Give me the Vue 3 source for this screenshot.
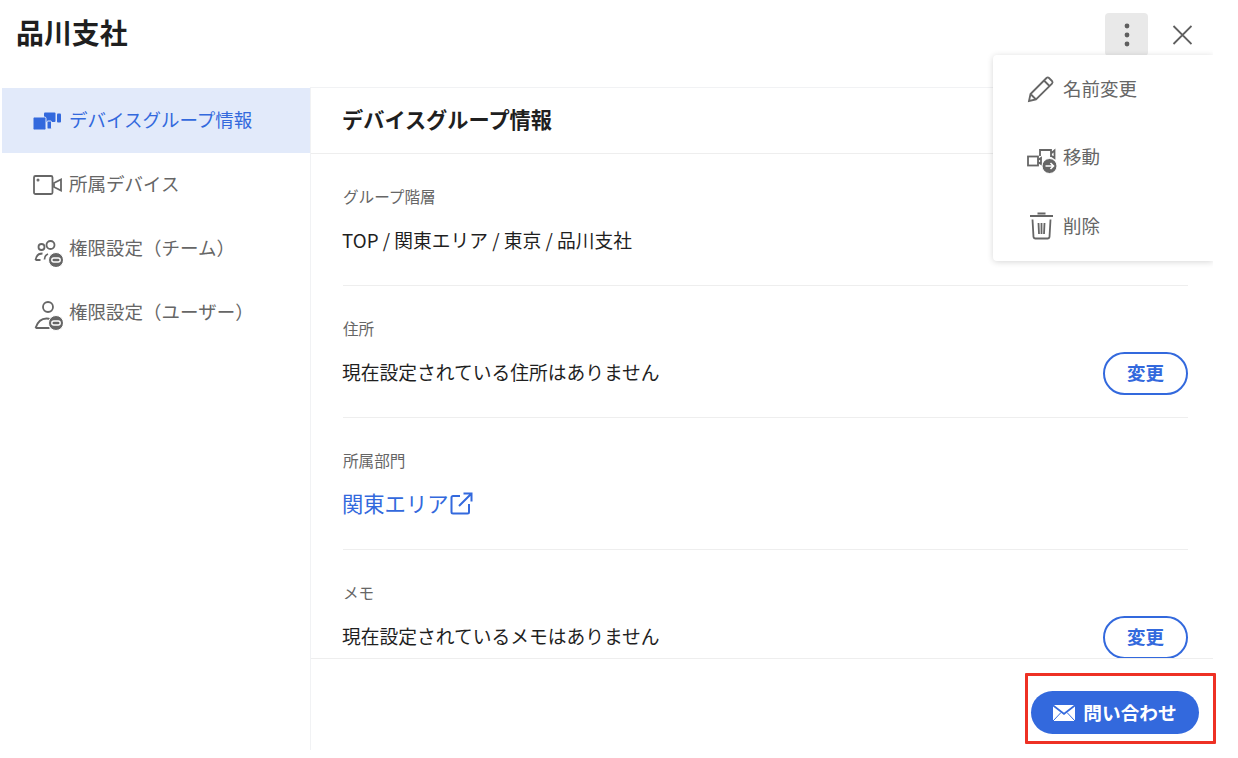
<template>
  <div class="page">
    <header class="top">
      <h1>品川支社</h1>
      <div class="top-actions">
        <button class="more">
          <svg width="6" height="24" viewBox="0 0 6 24"><circle cx="3" cy="3" r="2.4" /><circle cx="3" cy="12" r="2.4" /><circle cx="3" cy="21" r="2.4" /></svg>
        </button>
        <svg class="close" width="20" height="20" viewBox="0 0 20 20"><path d="M1.500 1l18 18M19.500 1L1.500 19" /></svg>
      </div>
    </header>

    <div class="body">
      <nav class="side">
        <a class="nav-item active">
          <svg width="30" height="22" viewBox="0 0 30 22" class="ico-fill">
            <rect x="11" y="2.500" width="11.500" height="9.500" rx="1" />
            <rect x="24" y="3.500" width="4" height="9" rx="1" />
            <rect x="14" y="11" width="4.500" height="8" rx="1" class="gap" />
            <rect x="0" y="7" width="13" height="13" rx="1.500" class="gap" />
          </svg>
          <span>デバイスグループ情報</span>
        </a>
        <a class="nav-item">
          <svg width="30" height="22" viewBox="0 0 30 22" class="ico-line">
            <rect x="1" y="2" width="18.500" height="18" rx="1.500" />
            <path d="M21 9l7-3.500v11L21 13z" />
            <circle cx="5" cy="6" r="0.600" />
          </svg>
          <span>所属デバイス</span>
        </a>
        <a class="nav-item">
          <svg width="30" height="36" viewBox="0 0 30 36" class="ico-line">
            <circle cx="8.500" cy="16" r="3" />
            <circle cx="17.500" cy="14" r="4" />
            <path d="M2.500 29h5M2.500 29c.5-4 3-6.500 7-6.500M11.500 28.500c0-2.500 1-4.500 3.500-5.500" />
            <circle cx="23" cy="29" r="7.500" class="dark" />
            <rect x="18.800" y="27" width="8.400" height="4" rx="2" class="cut" />
          </svg>
          <span>権限設定（チーム）</span>
        </a>
        <a class="nav-item">
          <svg width="30" height="36" viewBox="0 0 30 36" class="ico-line">
            <circle cx="15" cy="12" r="5" />
            <path d="M2.500 33h14M2.500 33c2-6 6-9.500 11-9.500 1.500 0 3 .3 4.500 1" />
            <circle cx="23" cy="28" r="7.500" class="dark" />
            <rect x="18.800" y="26" width="8.400" height="4" rx="2" class="cut" />
          </svg>
          <span>権限設定（ユーザー）</span>
        </a>
      </nav>

      <main class="main">
        <h2 class="main-title">デバイスグループ情報</h2>
        <div class="scroll">
          <section class="info">
            <p class="label">グループ階層</p>
            <div class="row"><span>TOP / 関東エリア / 東京 / 品川支社</span></div>
          </section>
          <section class="info">
            <p class="label">住所</p>
            <div class="row">
              <span>現在設定されている住所はありません</span>
              <button class="change">変更</button>
            </div>
          </section>
          <section class="info">
            <p class="label">所属部門</p>
            <div class="row">
              <a class="link">関東エリア
                <svg width="23" height="23" viewBox="0 0 23 23"><path d="M10 4H3a1.500 1.500 0 0 0-1.500 1.500v14.500a1.500 1.500 0 0 0 1.500 1.500h14.500a1.500 1.500 0 0 0 1.500-1.500v-8M9 14L21 2M13.500 1.500h8v8" /></svg>
              </a>
            </div>
          </section>
          <section class="info">
            <p class="label">メモ</p>
            <div class="row">
              <span>現在設定されているメモはありません</span>
              <button class="change">変更</button>
            </div>
          </section>
        </div>
        <footer class="foot">
          <button class="contact">
            <svg width="22" height="16" viewBox="0 0 22 16"><path class="env" d="M0 1.500 11 10 22 1.500V15a1 1 0 0 1-1 1H1a1 1 0 0 1-1-1zM1 0h20L11 7.800z" /><path class="env-line" d="M0 16l8-8.500M22 16l-8-8.500" /></svg>
            <span>問い合わせ</span>
          </button>
        </footer>
      </main>
    </div>

    <ul class="menu">
      <li>
        <svg width="30" height="28" viewBox="0 0 30 28" class="ico-line"><path d="M2 26l1.500-7L19.500 3a1.800 1.800 0 0 1 2.500 0l3 3a1.800 1.800 0 0 1 0 2.500L9 24.500zM3.500 19L9 24.500M17 5.500L22.500 11" /></svg>
        <span>名前変更</span>
      </li>
      <li>
        <svg width="30" height="26" viewBox="0 0 30 26" class="ico-line">
          <rect x="1" y="11.500" width="10" height="9" />
          <path d="M11 15l3-2v6l-3-2M13 11V5h11v7M24.500 8l3-2.500v7.500l-3-2" />
          <circle cx="22.500" cy="21" r="7.500" class="dark" />
          <path d="M18.500 21h8M23.500 18l3 3-3 3" class="arrow" />
        </svg>
        <span class="up">移動</span>
      </li>
      <li>
        <svg width="30" height="28" viewBox="-1.500 0 30 28" class="ico-line"><path d="M1.500 4h23M9 1.500h8M4 7.500l1 17.500a2 2 0 0 0 2 1.500h12a2 2 0 0 0 2-1.500l1-17.500M10 11l.5 11M13 11v11M16 11l-.5 11" /></svg>
        <span>削除</span>
      </li>
    </ul>

    <div class="mark"></div>
  </div>
</template>

<script setup>
</script>

<style>
body {
  background: #fff;
}
</style>

<style scoped>
.page {
  position: relative;
  width: 1238px;
  height: 758px;
  overflow: hidden;
  background: #fff;
  color: #1f1f1f;
  font-family: "Noto Sans CJK JP", "Noto Sans", sans-serif;
}

.top {
  display: flex;
  justify-content: space-between;
  align-items: flex-start;
  height: 87px;
  padding: 0 46px 0 16px;
  box-sizing: border-box;
}

h1 {
  margin: 13px 0 0;
  font-size: 27.900px;
  line-height: 38px;
  font-weight: 700;
}

.top-actions {
  display: flex;
  align-items: center;
  gap: 24px;
  margin-top: 13px;
}

.more {
  display: flex;
  align-items: center;
  justify-content: center;
  width: 43px;
  height: 43px;
  padding: 0;
  border: none;
  border-radius: 4px;
  background: #e9e9e9;
}

.more circle {
  fill: #5f5f5f;
}

.close path {
  fill: none;
  stroke: #5f5f5f;
  stroke-width: 1.800;
}

.body {
  display: flex;
  width: 1211px;
  height: 663px;
  margin-left: 2px;
}

.side {
  flex: none;
  width: 309px;
  padding-top: 1px;
  box-sizing: border-box;
  border-right: 1px solid #f1f2f4;
}

.nav-item {
  display: flex;
  align-items: center;
  gap: 6px;
  height: 64px;
  padding-left: 31px;
  font-size: 18.500px;
  color: #666;
}

.nav-item span {
  padding-bottom: 4px;
}

.nav-item svg {
  flex: none;
}

.nav-item.active {
  height: 65px;
  background: #e2eafa;
  color: #3369dd;
}

.ico-fill {
  fill: #3369dd;
}

.ico-fill .gap {
  stroke: #e2eafa;
  stroke-width: 1;
}

.ico-line {
  fill: none;
  stroke: #666;
  stroke-width: 1.800;
}

.ico-line .dark {
  fill: #666;
  stroke: #fff;
  stroke-width: 1;
}

.ico-line .cut {
  stroke: #fff;
  stroke-width: 1.400;
}

.ico-line .arrow {
  stroke: #fff;
  stroke-width: 1.600;
}

.main {
  flex: 1;
  display: flex;
  flex-direction: column;
  min-width: 0;
  border-top: 1px solid #f1f2f4;
}

.main-title {
  flex: none;
  height: 66px;
  margin: 0;
  padding-left: 31px;
  box-sizing: border-box;
  border-bottom: 1px solid #eee;
  font-size: 21.200px;
  line-height: 62px;
  font-weight: 700;
}

.scroll {
  flex: 1;
  min-height: 0;
  overflow: hidden;
  padding: 0 25px 0 32px;
}

.info {
  height: 132px;
  box-sizing: border-box;
  padding-top: 30px;
  border-bottom: 1px solid #eee;
}

.label {
  margin: 0;
  font-size: 15.600px;
  line-height: 24px;
  color: #666;
}

.row {
  display: flex;
  justify-content: space-between;
  align-items: center;
  height: 44px;
  margin-top: 11px;
  font-size: 18.750px;
}

.row > span {
  padding-bottom: 4px;
  margin-left: -1px;
}

.change {
  width: 85px;
  height: 43px;
  padding: 0 0 2px;
  border: 2px solid #3369dd;
  border-radius: 22px;
  background: #fff;
  color: #3369dd;
  font-family: inherit;
  font-size: 18.500px;
  font-weight: 700;
}

.link {
  display: flex;
  align-items: center;
  gap: 1px;
  margin-left: -1px;
  color: #3369dd;
  font-size: 21.300px;
  line-height: 28px;
  padding-bottom: 4px;
}

.link svg {
  flex: none;
  fill: none;
  stroke: #3369dd;
  stroke-width: 2;
}

.foot {
  flex: none;
  display: flex;
  justify-content: flex-end;
  height: 92px;
  padding: 32px 14px 0 0;
  box-sizing: border-box;
  border-top: 1px solid #eee;
  background: #fff;
}

.contact {
  display: flex;
  align-items: center;
  justify-content: center;
  gap: 8px;
  width: 168px;
  height: 43px;
  padding: 0;
  border: none;
  border-radius: 22px;
  background: #3369dd;
  color: #fff;
  font-family: inherit;
  font-size: 18.700px;
  font-weight: 700;
}

.contact span {
  padding-bottom: 2px;
}

.env {
  fill: #fff;
}

.env-line {
  fill: none;
  stroke: #3369dd;
  stroke-width: 1;
}

.menu {
  position: absolute;
  left: 993px;
  top: 55px;
  width: 220px;
  height: 206px;
  margin: 0;
  padding: 0;
  list-style: none;
  background: #fff;
  border-radius: 4px 0 0 4px;
  box-shadow: 0 1px 6px rgba(0, 0, 0, 0.16);
  clip-path: inset(-12px 0 -12px -12px);
}

.menu li {
  display: flex;
  align-items: center;
  gap: 6px;
  height: 68.500px;
  padding-left: 34px;
  font-size: 18.500px;
  color: #666;
}

.menu span {
  padding-bottom: 2px;
}

.menu svg {
  flex: none;
  overflow: visible;
}

.menu .up {
  padding-bottom: 4px;
}

.mark {
  position: absolute;
  left: 1025px;
  top: 673px;
  width: 191px;
  height: 71px;
  box-sizing: border-box;
  border: 3px solid #ee3124;
  border-radius: 1px;
}
</style>
